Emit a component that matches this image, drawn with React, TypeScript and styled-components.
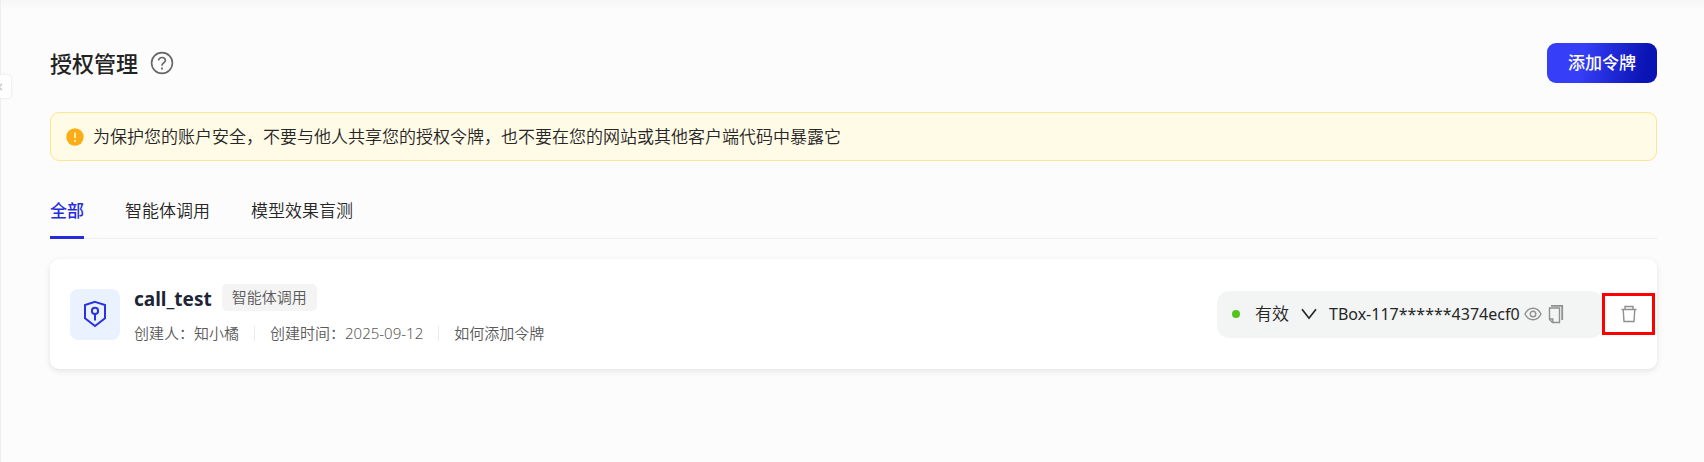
import React, { useState } from "react";
import styled, { createGlobalStyle } from "styled-components";

const GlobalStyle = createGlobalStyle`
  *, *::before, *::after { box-sizing: border-box; }
  body {
    margin: 0;
    background: #fcfcfc;
    color: #262626;
    font-family: "Noto Sans", "Noto Sans CJK SC", sans-serif;
    font-size: 17px;
    font-weight: 350;
    line-height: 26px;
  }
  button, select { font: inherit; color: inherit; }
`;

const Page = styled.div`
  position: relative;
  min-height: 100vh;
  padding: 43px 47px 40px 49px;
  border-left: 1px solid #eeeeee;
  background: linear-gradient(#f6f6f6, #fcfcfc 10px);
`;

const CollapseButton = styled.button`
  position: absolute;
  top: 75px;
  left: -1px;
  display: flex;
  align-items: center;
  width: 11px;
  height: 23px;
  padding: 0;
  border: 0;
  border-radius: 0 4px 4px 0;
  background: #ffffff;
  color: #c8c8c8;
  box-shadow: 0 0 3px rgba(0, 0, 0, 0.12);
`;

const Header = styled.header`
  display: flex;
  align-items: center;
  justify-content: space-between;
  height: 40px;
`;

const TitleGroup = styled.div`
  display: flex;
  align-items: center;
  gap: 12px;
`;

const Title = styled.h1`
  margin: 0;
  font-size: 22px;
  line-height: 32px;
  font-weight: 500;
  color: #222222;
`;

const IconButton = styled.button<{ $tone?: string }>`
  display: inline-flex;
  align-items: center;
  justify-content: center;
  padding: 0;
  border: 0;
  background: none;
  color: ${(p) => p.$tone ?? "#8f9090"};
  cursor: pointer;
`;

const PrimaryButton = styled.button`
  height: 40px;
  padding: 0 21px;
  border: 0;
  border-radius: 9px;
  background: linear-gradient(100deg, #363ef8 32%, #0a14b4 88%);
  color: #ffffff;
  font-weight: 500;
  cursor: pointer;
`;

const Notice = styled.div`
  display: flex;
  align-items: center;
  gap: 9px;
  min-height: 49px;
  margin-top: 29px;
  padding: 10px 15px;
  border: 1px solid #ffe58f;
  border-radius: 9px;
  background: #fffbe6;
`;

const Tabs = styled.nav`
  display: flex;
  gap: 41px;
  margin-top: 29px;
  border-bottom: 1px solid #efefef;
`;

const Tab = styled.button<{ $active: boolean }>`
  height: 49px;
  margin-bottom: -1px;
  padding: 0 0 4px;
  border: 0;
  border-bottom: 3px solid ${(p) => (p.$active ? "#232bdc" : "transparent")};
  background: none;
  color: ${(p) => (p.$active ? "#232bdc" : "#262626")};
  font-weight: ${(p) => (p.$active ? 500 : 350)};
  cursor: pointer;
`;

const Card = styled.article`
  display: flex;
  align-items: center;
  min-height: 110px;
  margin-top: 20px;
  padding: 0 2px 0 20px;
  border-radius: 9px;
  background: #ffffff;
  box-shadow: 0 2px 6px rgba(0, 0, 0, 0.1);
`;

const Avatar = styled.div`
  display: flex;
  align-items: center;
  justify-content: center;
  width: 50px;
  height: 51px;
  border-radius: 8px;
  background: #ebf2ff;
`;

const Info = styled.div`
  flex: 1;
  margin-left: 14px;
`;

const NameRow = styled.div`
  display: flex;
  align-items: center;
  gap: 10px;
  height: 34px;
`;

const Name = styled.h2`
  margin: 0;
  font-size: 19px;
  line-height: 28px;
  font-weight: 700;
  color: #1c2536;
`;

const Tag = styled.span`
  margin-bottom: 4px;
  padding: 0 10px;
  border-radius: 5px;
  background: #f4f4f4;
  color: #5a5a5a;
  font-size: 15px;
  line-height: 27px;
`;

const Meta = styled.div`
  display: flex;
  align-items: center;
  height: 26px;
  margin-top: 4px;
  color: #5a5a5a;
  font-size: 15px;
`;

const Divider = styled.span`
  width: 1px;
  height: 15px;
  margin: 0 15px;
  background: #eaeaea;
`;

const HelpLink = styled.a`
  color: inherit;
  text-decoration: none;
`;

const TokenBox = styled.div`
  display: flex;
  align-items: center;
  width: 386px;
  height: 47px;
  padding-left: 15px;
  border-radius: 12px;
  background: #f3f5f5;
`;

const StatusDot = styled.span`
  width: 8px;
  height: 8px;
  margin-right: 15px;
  border-radius: 50%;
  background: #52c41a;
`;

const StatusField = styled.label`
  display: grid;
  grid-template-columns: 46px 16px;
  align-items: center;
  margin-right: 12px;

  select {
    grid-area: 1 / 1 / 2 / 3;
    width: 100%;
    padding: 0;
    border: 0;
    background: none;
    appearance: none;
  }

  svg {
    grid-area: 1 / 2;
    pointer-events: none;
  }
`;

const TokenText = styled.span`
  font-size: 16px;
  font-weight: 400;
`;

const TokenActions = styled.div`
  display: flex;
  align-items: center;
  gap: 6px;
  margin-left: 4px;
`;

const DeleteFrame = styled.div`
  display: flex;
  align-items: center;
  justify-content: center;
  width: 53px;
  height: 42px;
  margin-left: -1px;
  border: 3px solid #ff0000;
  background: #ffffff;
`;

const tabNames = ["全部", "智能体调用", "模型效果盲测"];

function QuestionIcon() {
  return (
    <svg width="24" height="24" viewBox="0 0 24 24" fill="none" stroke="currentColor" strokeWidth="1.6">
      <circle cx="12" cy="12" r="10.4" />
      <path d="M8.6 9.6c0-1.9 1.5-3.1 3.4-3.1s3.4 1.2 3.4 3c0 2.3-3.4 2.5-3.4 4.8v.5" />
      <path d="M12 16.6v1.8" strokeWidth="1.8" />
    </svg>
  );
}

function WarningIcon() {
  return (
    <svg width="18" height="18" viewBox="0 0 18 18">
      <circle cx="9" cy="9" r="8.7" fill="#faad14" />
      <path d="M9 4.5v5.8M9 12v1.9" stroke="#fffbe6" strokeWidth="1.5" />
    </svg>
  );
}

function ShieldKeyIcon() {
  return (
    <svg width="24" height="28" viewBox="0 0 24 28" fill="none" stroke="#2b33e0" strokeWidth="2">
      <path d="M12 1.9 22 5v13.2L12 26.1 2 18.2V5z" />
      <circle cx="12" cy="10.9" r="3.1" />
      <path d="M12 14v6.6" />
    </svg>
  );
}

function ChevronIcon() {
  return (
    <svg width="16" height="12" viewBox="0 0 16 12" fill="none" stroke="#262626" strokeWidth="1.7">
      <path d="M1 1.2 8 10.2 15 1.2" />
    </svg>
  );
}

function EyeIcon() {
  return (
    <svg width="18" height="16" viewBox="0 0 18 16" fill="none" stroke="currentColor" strokeWidth="1.4">
      <path d="M1 8c1.9-3.900 4.600-5.800 8-5.800S15.100 4.100 17 8c-1.900 3.900-4.600 5.800-8 5.800S2.900 11.900 1 8z" />
      <circle cx="9" cy="8" r="2.800" />
    </svg>
  );
}

function CopyIcon() {
  return (
    <svg width="16" height="20" viewBox="0 0 16 20" fill="none" stroke="currentColor" strokeWidth="1.4">
      <path d="M3 1.800h11.200V16" strokeWidth="1.800" />
      <path d="M1.500 4h10v14.500H4.500l-3-3z" />
      <path d="M1.500 15h3.300v3.500" />
    </svg>
  );
}

function TrashIcon() {
  return (
    <svg width="16" height="18" viewBox="0 0 16 18" fill="none" stroke="currentColor" strokeWidth="1.4">
      <path d="M.5 4.5h15M4 4.5v-3h8v3M2.2 4.5l.8 12h10l.8-12" />
    </svg>
  );
}

export default function App() {
  const [active, setActive] = useState(0);
  return (
    <>
      <GlobalStyle />
      <Page>
        <CollapseButton aria-label="收起">
          <svg width="3" height="8" viewBox="0 0 3 8" fill="none" stroke="currentColor" strokeWidth="1.5">
            <path d="M2 .8-1 4l3 3.2" />
          </svg>
        </CollapseButton>
        <Header>
          <TitleGroup>
            <Title>授权管理</Title>
            <IconButton $tone="#666666" aria-label="帮助"><QuestionIcon /></IconButton>
          </TitleGroup>
          <PrimaryButton>添加令牌</PrimaryButton>
        </Header>
        <Notice role="note">
          <WarningIcon />
          <span>为保护您的账户安全，不要与他人共享您的授权令牌，也不要在您的网站或其他客户端代码中暴露它</span>
        </Notice>
        <Tabs role="tablist">
          {tabNames.map((name, i) => (
            <Tab key={name} role="tab" aria-selected={i === active} $active={i === active} onClick={() => setActive(i)}>
              {name}
            </Tab>
          ))}
        </Tabs>
        <Card>
          <Avatar><ShieldKeyIcon /></Avatar>
          <Info>
            <NameRow>
              <Name>call_test</Name>
              <Tag>智能体调用</Tag>
            </NameRow>
            <Meta>
              <span>创建人：知小橘</span>
              <Divider />
              <span>创建时间：2025-09-12</span>
              <Divider />
              <HelpLink href="#help">如何添加令牌</HelpLink>
            </Meta>
          </Info>
          <TokenBox>
            <StatusDot />
            <StatusField>
              <select aria-label="令牌状态" defaultValue="有效">
                <option>有效</option>
              </select>
              <ChevronIcon />
            </StatusField>
            <TokenText>TBox-117******4374ecf0</TokenText>
            <TokenActions>
              <IconButton aria-label="显示令牌"><EyeIcon /></IconButton>
              <IconButton aria-label="复制令牌"><CopyIcon /></IconButton>
            </TokenActions>
          </TokenBox>
          <DeleteFrame>
            <IconButton aria-label="删除"><TrashIcon /></IconButton>
          </DeleteFrame>
        </Card>
      </Page>
    </>
  );
}
